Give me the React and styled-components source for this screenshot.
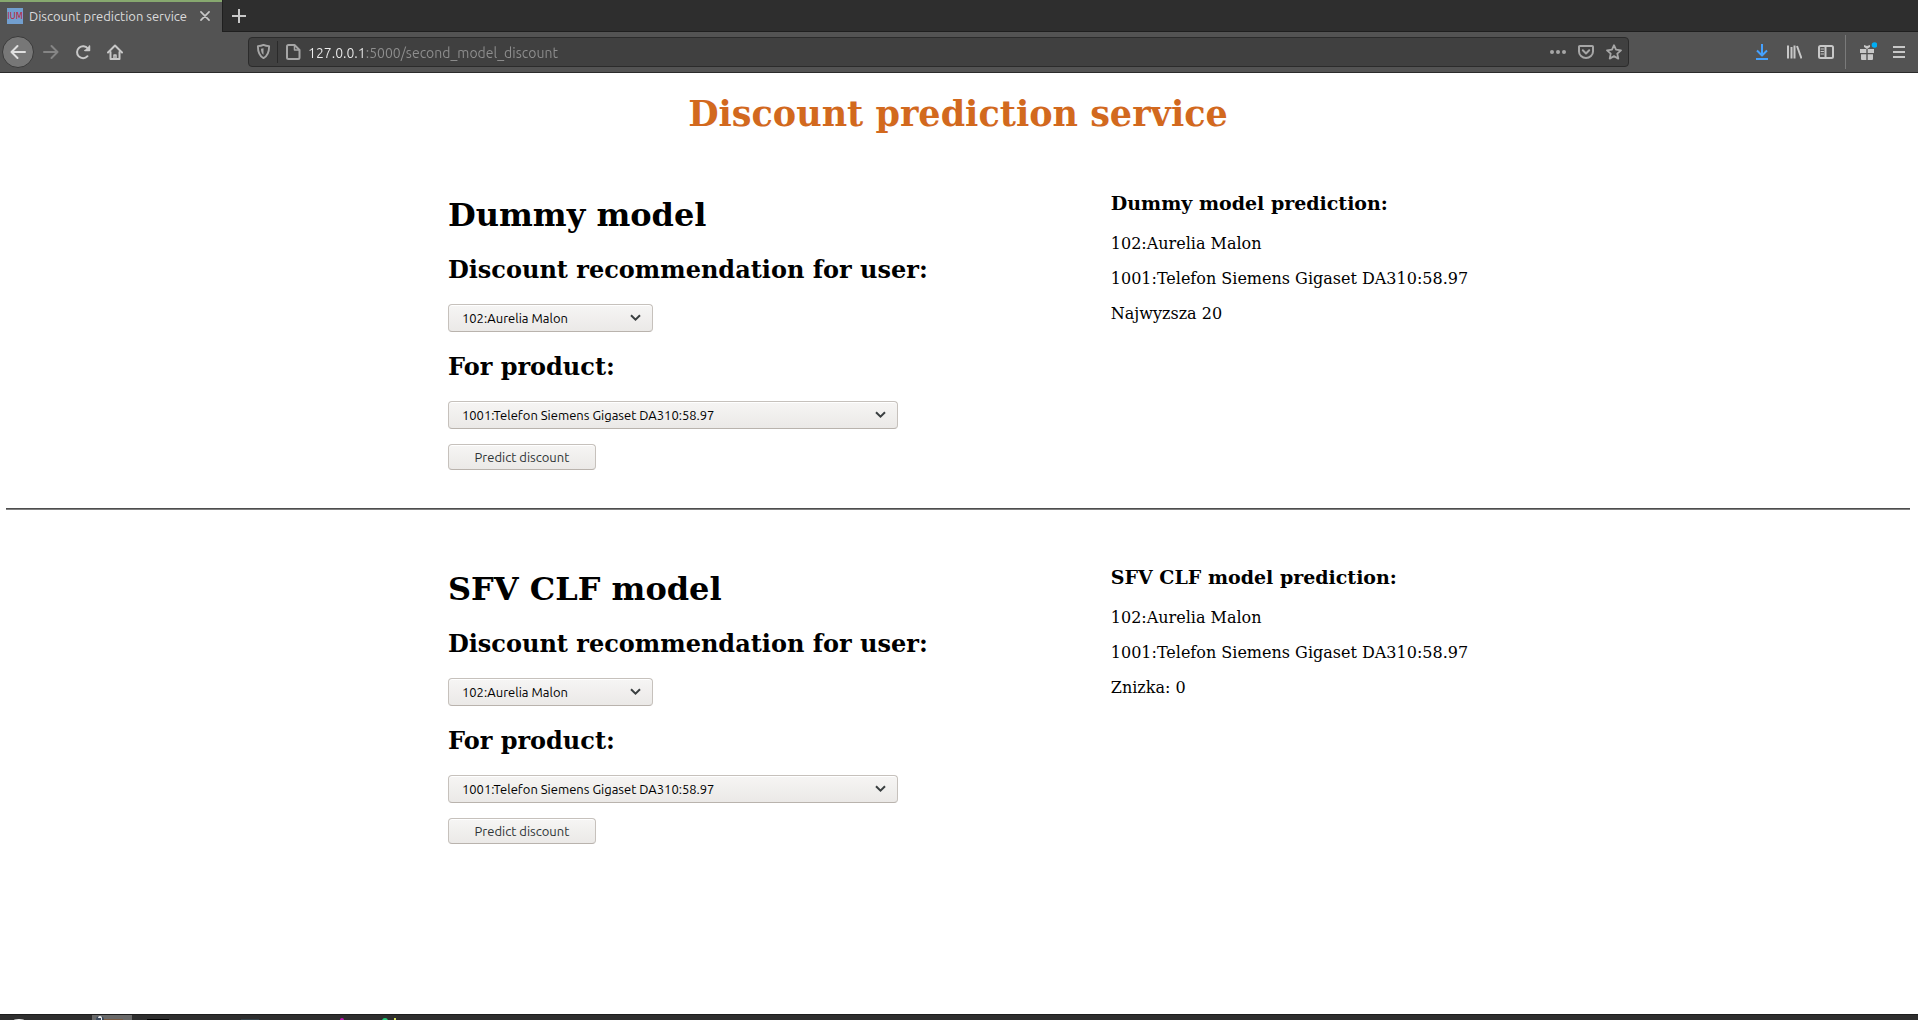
import React, { useId } from "react";
import styled, { createGlobalStyle } from "styled-components";

const uiFont = `Ubuntu, "Noto Sans", "Open Sans", sans-serif`;

const GlobalStyle = createGlobalStyle`
  *, *::before, *::after { box-sizing: border-box; }
  body {
    margin: 0;
    background: #fff;
    color: #000;
    font-family: "DejaVu Serif", serif;
    font-size: 16px;
  }
`;

const Window = styled.div`
  display: flex;
  flex-direction: column;
  min-height: 100vh;
`;

/* ---------- browser chrome ---------- */

const TabStrip = styled.div`
  display: flex;
  align-items: stretch;
  height: 32px;
  background: #2e2e2e;
  font-family: ${uiFont};
`;

const Tab = styled.div`
  display: flex;
  align-items: center;
  width: 222px;
  padding: 0 5px 2px 7px;
  border-top: 2px solid #87a86f;
  background: #535353;
`;

const TabTitle = styled.button`
  display: flex;
  flex: 1;
  align-items: center;
  gap: 6px;
  padding: 0;
  border: 0;
  background: none;
  color: #dcdcdc;
  font-family: inherit;
  font-size: 13px;
  white-space: nowrap;
`;

const Favicon = styled.span`
  width: 16px;
  height: 16px;
  background: #729fcf;
  color: #c01c38;
  font-family: "DejaVu Sans Condensed", "DejaVu Sans", sans-serif;
  font-size: 9px;
  line-height: 17px;
  text-align: center;
`;

const IconButton = styled.button`
  display: grid;
  place-items: center;
  flex: none;
  width: ${(p) => p.$width || 32}px;
  height: 32px;
  padding: 0;
  border: 0;
  background: none;
  color: ${(p) => p.$color || "#c8c8c8"};
`;

const CloseButton = styled(IconButton)`
  width: 24px;
  height: 24px;
`;

const TabRest = styled.div`
  display: flex;
  flex: 1;
  align-items: center;
  border-left: 1px solid #1f1f1f;
  border-bottom: 1px solid #1f1f1f;
`;

const NavBar = styled.div`
  display: flex;
  align-items: center;
  height: 41px;
  padding: 0 3px 1px 2px;
  border-bottom: 1px solid #2b2b2b;
  background: #535353;
  font-family: ${uiFont};
`;

const BackButton = styled(IconButton)`
  margin-right: 1px;
  border: 1px solid #3b3b3b;
  border-radius: 50%;
  background: #777;
  color: #e0e0e0;
`;

const Spacer = styled.div`
  flex: 0 1 117px;
`;

const UrlBar = styled.div`
  display: flex;
  align-items: center;
  flex: 1;
  height: 30px;
  border: 1px solid #2b2b2b;
  border-radius: 4px;
  background: #404040;
`;

const UrlDivider = styled.span`
  width: 1px;
  height: 22px;
  background: #2a2a2a;
`;

const UrlInput = styled.input`
  flex: 1;
  min-width: 0;
  height: 26px;
  padding: 2px 0 0;
  border: 0;
  outline: 0;
  background: linear-gradient(to right, #ececec 56px, #8f8f8f 56px);
  background-clip: text;
  -webkit-text-fill-color: transparent;
  font-family: inherit;
  font-size: 14px;
`;

const NavDivider = styled.span`
  width: 1px;
  height: 34px;
  margin: 0 5px 0 3px;
  background: #7a7a7a;
`;

/* ---------- page ---------- */

const Page = styled.main`
  flex: 1;
  padding: 20px 8px 0 6px;
`;

const Title = styled.h1`
  margin: 0 0 58px;
  color: #d2691e;
  font-size: 35px;
  line-height: 41px;
  text-align: center;
`;

const ModelSection = styled.section`
  display: flex;
  justify-content: center;
  gap: 183px;
`;

const Rule = styled.hr`
  height: 2px;
  margin: 38px 0 56px;
  border: 0;
  border-top: 1px solid #4d4d4d;
  background: #808080;
`;

const Form = styled.form`
  display: flex;
  flex-direction: column;
  align-items: flex-start;
  padding-top: 5px;
`;

const ModelName = styled.h2`
  margin: 0 0 22px;
  font-size: 32px;
  line-height: 37px;
`;

const FieldName = styled.h3`
  margin: 0 0 20px;
  font-size: 24px;
  line-height: 28px;
`;

const SelectBox = styled.div`
  position: relative;
  width: ${(p) => p.$width}px;
  margin-bottom: ${(p) => p.$after}px;
  color: #3a3f40;

  svg {
    position: absolute;
    top: 10px;
    right: 12px;
    pointer-events: none;
  }
`;

const Select = styled.select`
  display: block;
  appearance: none;
  width: 100%;
  height: 28px;
  padding: 0 32px 0 13px;
  border: 1px solid #c6c1bc;
  border-bottom-color: #b9b3ad;
  border-radius: 4px;
  background: linear-gradient(#f6f5f4, #ebe9e7);
  box-shadow: inset 0 1px #fff;
  color: #000;
  font-family: ${uiFont};
  font-size: 13px;
`;

const SubmitButton = styled.button`
  width: 148px;
  height: 26px;
  padding: 0;
  border: 1px solid #c6c1bc;
  border-bottom-color: #b9b3ad;
  border-radius: 4px;
  background: linear-gradient(#f6f5f4, #ebe9e7);
  box-shadow: inset 0 1px #fff;
  color: #2e3436;
  font-family: ${uiFont};
  font-size: 13px;
`;

const ResultTitle = styled.h3`
  margin: 0 0 20px;
  font-size: 19px;
  line-height: 22px;
`;

const ResultLine = styled.p`
  margin: 0 0 16px;
  line-height: 19px;
`;

const Taskbar = styled.footer`
  height: 6px;
  overflow: hidden;
  border-top: 1px solid #1c1c1c;
  background: #2e2e2e;

  svg { display: block; }
`;

const Icon = ({ size = 16, children, ...rest }) => (
  <svg
    width={size}
    height={size}
    viewBox="0 0 16 16"
    fill="none"
    stroke="currentColor"
    strokeWidth="2"
    strokeLinecap="round"
    strokeLinejoin="round"
    aria-hidden="true"
    {...rest}
  >
    {children}
  </svg>
);

function Dropdown({ label, value, width, after }) {
  const id = useId();
  return (
    <>
      <FieldName>
        <label htmlFor={id}>{label}</label>
      </FieldName>
      <SelectBox $width={width} $after={after}>
        <Select id={id} defaultValue={value}>
          <option>{value}</option>
        </Select>
        <svg width="11" height="8" viewBox="0 0 11 8" fill="none" stroke="currentColor" strokeWidth="2" aria-hidden="true">
          <path d="M1 1.2 5.5 5.6 10 1.2" />
        </svg>
      </SelectBox>
    </>
  );
}

function Model({ name, outcome }) {
  const user = "102:Aurelia Malon";
  const product = "1001:Telefon Siemens Gigaset DA310:58.97";
  return (
    <ModelSection>
      <Form onSubmit={(e) => e.preventDefault()}>
        <ModelName>{name}</ModelName>
        <Dropdown label="Discount recommendation for user:" value={user} width={205} after={21} />
        <Dropdown label="For product:" value={product} width={450} after={15} />
        <SubmitButton>Predict discount</SubmitButton>
      </Form>
      <div>
        <ResultTitle>{name} prediction:</ResultTitle>
        <ResultLine>{user}</ResultLine>
        <ResultLine>{product}</ResultLine>
        <ResultLine>{outcome}</ResultLine>
      </div>
    </ModelSection>
  );
}

function BrowserChrome() {
  return (
    <header>
      <TabStrip>
        <Tab>
          <TabTitle>
            <Favicon>IUM</Favicon>
            Discount prediction service
          </TabTitle>
          <CloseButton aria-label="Close tab">
            <Icon size={10} strokeWidth="2.6"><path d="M1.5 1.5l13 13M14.5 1.5l-13 13" /></Icon>
          </CloseButton>
        </Tab>
        <TabRest>
          <IconButton aria-label="New tab">
            <svg width="14" height="14" viewBox="0 0 14 14" stroke="currentColor" strokeWidth="2" aria-hidden="true">
              <path d="M7 0v14M0 7h14" />
            </svg>
          </IconButton>
        </TabRest>
      </TabStrip>
      <NavBar>
        <BackButton aria-label="Back">
          <Icon><path d="M15 8H1.5M7.5 2l-6 6 6 6" /></Icon>
        </BackButton>
        <IconButton aria-label="Forward" $color="#858585">
          <Icon><path d="M1 8h13.500M8.500 2l6 6-6 6" /></Icon>
        </IconButton>
        <IconButton aria-label="Reload">
          <Icon>
            <path d="M12.500 12.200A6 6 0 1 1 12.800 4.500" />
            <path d="M14.500 1.500v5.500H9z" fill="currentColor" stroke="none" />
            <path d="M14.500 2v4.500H10" strokeWidth="1.500" />
          </Icon>
        </IconButton>
        <IconButton aria-label="Home">
          <Icon>
            <path d="M1 8.500 8 1.500l7 7" />
            <path d="M3.500 8v7h9V8" />
            <path d="M7 15v-4h2v4" strokeWidth="1.500" />
          </Icon>
        </IconButton>
        <Spacer />
        <UrlBar>
          <IconButton $width={28} $color="#a6a6a6" aria-label="Tracking protection">
            <Icon size={15}>
              <path d="M8 1c2 1 4 1.300 6 1.300 0 6-1 10-6 12.700C3 12.300 2 8.300 2 2.300 4 2.300 6 2 8 1z" />
              <path d="M8 4.500v7C6 10 5.300 7.500 5.300 5 6.500 5 7.200 4.800 8 4.500z" fill="currentColor" stroke="none" />
            </Icon>
          </IconButton>
          <UrlDivider />
          <IconButton $width={30} $color="#a6a6a6" aria-label="Site information">
            <Icon>
              <path d="M3.500 1H9.500l5 5v7.500a1.500 1.500 0 0 1-1.500 1.500H3.500A1.500 1.500 0 0 1 2 13.500v-11A1.500 1.500 0 0 1 3.500 1z" />
              <path d="M9.500 1.500v4.500h4.500" strokeWidth="1.500" />
            </Icon>
          </IconButton>
          <UrlInput aria-label="Address" defaultValue="127.0.0.1:5000/second_model_discount" />
          <IconButton $width={28} $color="#a6a6a6" aria-label="Page actions">
            <Icon fill="currentColor" stroke="none">
              <circle cx="2" cy="8" r="2" />
              <circle cx="8" cy="8" r="2" />
              <circle cx="14" cy="8" r="2" />
            </Icon>
          </IconButton>
          <IconButton $width={28} $color="#a6a6a6" aria-label="Save to Pocket">
            <Icon>
              <path d="M1.800 2h12.400a.8.8 0 0 1 .8.8V7.500a7 6.500 0 0 1-14 0V2.800a.8.8 0 0 1 .8-.8z" />
              <path d="M4.800 6.300 8 9.500l3.200-3.200" />
            </Icon>
          </IconButton>
          <IconButton $width={28} $color="#a6a6a6" aria-label="Bookmark">
            <Icon strokeWidth="1.800">
              <path d="M8 1.200l2 4.500 5 .6-3.700 3.300 1 5L8 12.100l-4.300 2.500 1-5L1 6.300l5-.6z" />
            </Icon>
          </IconButton>
        </UrlBar>
        <Spacer />
        <IconButton $color="#45a1ff" aria-label="Downloads">
          <Icon strokeLinecap="butt">
            <path d="M8 0v11M3 6.500 8 11.500l5-5M2 15h12" />
          </Icon>
        </IconButton>
        <IconButton aria-label="Library">
          <Icon strokeLinecap="butt">
            <path d="M2 1.500v13M5.500 3v11.500M8.500 1.500v13M11 2l4.500 12.500" />
          </Icon>
        </IconButton>
        <IconButton aria-label="Sidebars">
          <Icon>
            <rect x="1" y="2" width="14" height="12" rx="1.500" />
            <path d="M7.500 2v12" />
            <path d="M3 5h2.500M3 7.500h2.500M3 10h2.500" strokeWidth="1" />
          </Icon>
        </IconButton>
        <NavDivider />
        <IconButton aria-label="What's new">
          <svg width="20" height="20" viewBox="0 0 20 20" fill="currentColor" aria-hidden="true">
            <path d="M3 7h6.300v4H3zM10.700 7H17v4h-6.300zM4 12.200h5.300V18H5a1 1 0 0 1-1-1zM10.700 12.200H16V17a1 1 0 0 1-1 1h-4.300zM7 3l3 1 3-1v2l-3 2-3-2z" />
            <circle cx="17.500" cy="3" r="2.800" fill="#00aef5" />
          </svg>
        </IconButton>
        <IconButton aria-label="Menu">
          <Icon size={16} strokeLinecap="butt">
            <path d="M2 3h12M2 8h12M2 13h12" />
          </Icon>
        </IconButton>
      </NavBar>
    </header>
  );
}

export default function App() {
  return (
    <Window>
      <GlobalStyle />
      <BrowserChrome />
      <Page>
        <Title>Discount prediction service</Title>
        <Model name="Dummy model" outcome="Najwyzsza 20" />
        <Rule />
        <Model name="SFV CLF model" outcome="Znizka: 0" />
      </Page>
      <Taskbar>
        <svg width="640" height="5" viewBox="0 0 640 5" aria-hidden="true">
          <ellipse cx="19" cy="6" rx="6" ry="2" fill="#eee" />
          <rect x="92" width="40" height="5" fill="#696969" />
          <path d="M104 4h19v1h-19z" fill="#7b5b43" />
          <circle cx="100" cy="5" r="4" fill="#3c4a5c" />
          <path d="M98 3a2 2 0 0 1 4 0v2h-1V3z" fill="#f0f0f0" />
          <rect x="147" y="4" width="22" height="1" fill="#000" />
          <rect x="241" y="4" width="18" height="1" fill="#36444c" />
          <circle cx="342" cy="5" r="2" fill="#c217b5" />
          <circle cx="385" cy="6" r="3" fill="#21d07a" />
          <rect x="394" y="3" width="2" height="2" fill="#dce35b" />
        </svg>
      </Taskbar>
    </Window>
  );
}
